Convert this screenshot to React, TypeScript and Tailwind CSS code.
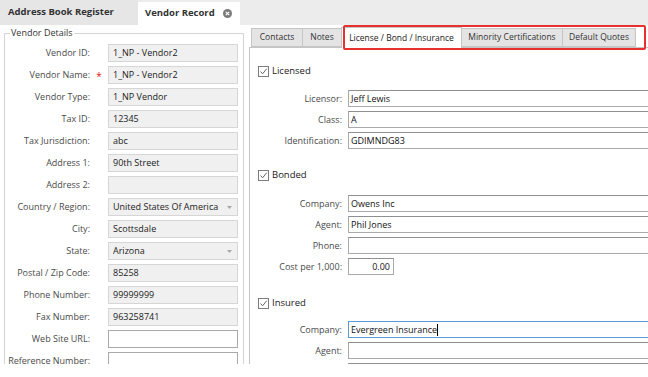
import React from "react";

const font = { fontFamily: '"Open Sans", "Liberation Sans", sans-serif' };

function LeftRow({
  label,
  value,
  required,
  kind = "ro",
}: {
  label: string;
  value?: string;
  required?: boolean;
  kind?: "ro" | "edit" | "select";
}) {
  const box =
    kind === "edit"
      ? "bg-white border border-[#a9a9a9]"
      : "bg-[#f0f0f0] border border-[#d6d6d6]";
  return (
    <div className="flex items-center h-[18px] mb-[4px]">
      <div className="w-[85px] shrink-0 text-right text-[#4a4a4a] whitespace-nowrap">{label}</div>
      <div className="w-[18px] shrink-0 flex justify-center text-[#e02020] text-[10px] leading-none pt-[2px]">
        {required ? "*" : ""}
      </div>
      <div className={`w-[130px] shrink-0 h-[18px] ${box} flex items-center pl-[4px] pr-[5px] text-[#222]`}>
        <span className="flex-1 truncate">{value}</span>
        {kind === "select" && (
          <svg width="5" height="3" viewBox="0 0 5 3">
            <path d="M0 0 L5 0 L2.5 3 Z" fill="#a8a8a8" />
          </svg>
        )}
      </div>
    </div>
  );
}

function RightRow({
  label,
  value,
  focused,
  small,
  right,
}: {
  label: string;
  value?: string;
  focused?: boolean;
  small?: boolean;
  right?: boolean;
}) {
  return (
    <div className="flex items-center h-[17px] mb-[4px]">
      <div className="w-[92px] shrink-0 text-right text-[#4a4a4a] whitespace-nowrap">{label}</div>
      <div className="w-[6px] shrink-0" />
      <div
        className={`${small ? "w-[46px]" : "w-[320px]"} shrink-0 h-[17px] bg-white border ${
          focused ? "border-[#5b9bd5]" : "border-[#a9a9a9] border-t-[#8f8f8f]"
        } flex items-center px-[2px] text-[#111] ${right ? "justify-end pr-[3px]" : ""}`}
      >
        <span>{value}</span>
        {focused && <span className="w-px h-[12px] bg-black" />}
      </div>
    </div>
  );
}

function Check({ label }: { label: string }) {
  return (
    <div className="flex items-center h-[11px] pl-[8px]">
      <div className="w-[11px] h-[11px] border border-[#7d7d7d] bg-white flex items-center justify-center">
        <svg width="9" height="9" viewBox="0 0 9 9">
          <path d="M1.5 4.5 L3.6 6.8 L7.8 1.6" fill="none" stroke="#666" strokeWidth="1" />
        </svg>
      </div>
      <span className="ml-[3px] text-[#222] text-[9.5px]">{label}</span>
    </div>
  );
}

export default function App() {
  const subTabs = [
    { t: "Contacts", w: 52 },
    { t: "Notes", w: 40 },
    { t: "License / Bond / Insurance", w: 121, active: true },
    { t: "Minority Certifications", w: 102 },
    { t: "Default Quotes", w: 74 },
  ];
  return (
    <div className="w-[648px] h-[377px] bg-white">
      <div className="w-[648px] h-[364px] overflow-hidden bg-white text-[9px] flex flex-col" style={font}>
        {/* top tab bar */}
        <div className="h-[25px] bg-[#ececec] flex items-end shrink-0">
          <div className="w-[138px] h-[25px] bg-[#e6e6e6] flex items-center pl-[8px] font-bold text-[#333] text-[9.5px]">
            Address Book Register
          </div>
          <div className="w-[102px] h-[23px] bg-white flex items-center pl-[7px] pr-[8px] font-bold text-[#333] text-[9.5px]">
            <span className="flex-1">Vendor Record</span>
            <svg width="9" height="9" viewBox="0 0 9 9">
              <circle cx="4.5" cy="4.5" r="4.5" fill="#7b7b7b" />
              <path d="M2.8 2.8 L6.2 6.2 M6.2 2.8 L2.8 6.2" stroke="#fff" strokeWidth="1.2" />
            </svg>
          </div>
        </div>

        <div className="flex flex-1 min-h-0">
          {/* left panel */}
          <div className="w-[249px] shrink-0 bg-white">
            <fieldset className="ml-[4px] mt-[1px] w-[240px] border border-[#d4d4d4] pb-2">
              <legend className="ml-[5px] px-[1px] text-[#333] leading-[14px]">Vendor Details</legend>
              <div className="pt-[4px]">
                <LeftRow label="Vendor ID:" value="1_NP - Vendor2" />
                <LeftRow label="Vendor Name:" value="1_NP - Vendor2" required />
                <LeftRow label="Vendor Type:" value="1_NP Vendor" />
                <LeftRow label="Tax ID:" value="12345" />
                <LeftRow label="Tax Jurisdiction:" value="abc" />
                <LeftRow label="Address 1:" value="90th Street" />
                <LeftRow label="Address 2:" value="" />
                <LeftRow label="Country /  Region:" value="United States Of America" kind="select" />
                <LeftRow label="City:" value="Scottsdale" />
                <LeftRow label="State:" value="Arizona" kind="select" />
                <LeftRow label="Postal / Zip Code:" value="85258" />
                <LeftRow label="Phone Number:" value="99999999" />
                <LeftRow label="Fax Number:" value="963258741" />
                <LeftRow label="Web Site URL:" value="" kind="edit" />
                <LeftRow label="Reference Number:" value="" kind="edit" />
              </div>
            </fieldset>
          </div>

          {/* right panel */}
          <div className="flex-1 flex flex-col relative min-w-0">
            <div className="h-[22px] flex items-end pl-[2px] shrink-0 text-[8.5px]">
              {subTabs.map((s) =>
                s.active ? (
                  <div
                    key={s.t}
                    style={{ width: s.w }}
                    className="h-[21px] -mb-px -mr-px bg-white border border-b-0 border-[#c5c5c5] flex items-center justify-center text-[#222] relative z-10"
                  >
                    {s.t}
                  </div>
                ) : (
                  <div
                    key={s.t}
                    style={{ width: s.w }}
                    className="h-[19px] bg-[#e4e4e4] border border-[#c5c5c5] -mr-px flex items-center justify-center text-[#333]"
                  >
                    {s.t}
                  </div>
                )
              )}
            </div>
            <div className="flex-1 border-t border-l border-[#c5c5c5] bg-white pt-[18px] overflow-hidden">
              <Check label="Licensed" />
              <div className="mt-[13px]">
                <RightRow label="Licensor:" value="Jeff Lewis" />
                <RightRow label="Class:" value="A" />
                <RightRow label="Identification:" value="GDIMNDG83" />
              </div>
              <div className="mt-[21px]">
                <Check label="Bonded" />
              </div>
              <div className="mt-[14px]">
                <RightRow label="Company:" value="Owens Inc" />
                <RightRow label="Agent:" value="Phil Jones" />
                <RightRow label="Phone:" value="" />
                <RightRow label="Cost per 1,000:" value="0.00" small right />
              </div>
              <div className="mt-[23px]">
                <Check label="Insured" />
              </div>
              <div className="mt-[12px]">
                <RightRow label="Company:" value="Evergreen Insurance" focused />
                <RightRow label="Agent:" value="" />
                <RightRow label="" value="" />
              </div>
            </div>
            {/* annotation highlight */}
            <div className="absolute left-[94px] top-0 w-[303px] h-[25px] border-2 border-[#e8312f] rounded-[2px] pointer-events-none z-20" />
          </div>
        </div>
      </div>
    </div>
  );
}
